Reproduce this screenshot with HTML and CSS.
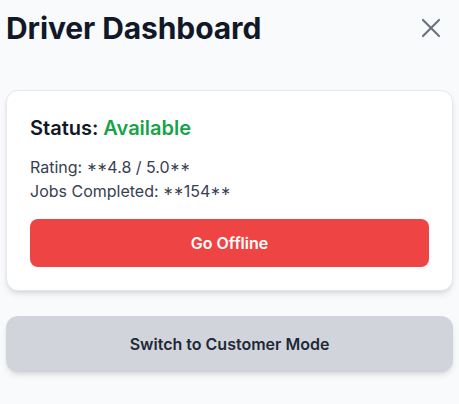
FILE: index.html
```html
<!DOCTYPE html>
<html>
<head>
<meta charset="utf-8">
<link rel="stylesheet" href="styles.css">
</head>
<body>
<div class="page">
  <header class="header">
    <h1 class="title">Driver Dashboard</h1>
    <button class="close" aria-label="Close">
      <svg viewBox="0 0 24 24" width="32" height="32" fill="none" stroke="currentColor" stroke-width="1.6" stroke-linecap="round" stroke-linejoin="round"><path d="M6 18L18 6M6 6l12 12"/></svg>
    </button>
  </header>
  <section class="card">
    <h2 class="status">Status: <span class="available">Available</span></h2>
    <p class="line">Rating: <span class="ast">**</span>4.8 / 5.0<span class="ast">**</span></p>
    <p class="line">Jobs Completed: <span class="ast">**</span>154<span class="ast">**</span></p>
    <button class="btn-offline">Go Offline</button>
  </section>
  <button class="btn-switch">Switch to Customer Mode</button>
</div>
</body>
</html>
```

FILE: styles.css
```css
* { box-sizing: border-box; }
html, body { margin: 0; padding: 0; }
body {
  background: #f9fafb;
  font-family: Inter, "Noto Sans", sans-serif;
  color: #111827;
}
.page {
  padding: 10px 6px 24px;
  display: flex;
  flex-direction: column;
}
.header {
  display: flex;
  justify-content: space-between;
  align-items: center;
  margin-bottom: 44px;
  height: 36px;
}
.title {
  margin: 0;
  font-size: 30px;
  line-height: 36px;
  font-weight: 700;
  letter-spacing: -0.1px;
  color: #111827;
}
.close {
  border: none;
  background: none;
  padding: 0;
  margin-right: 6px;
  width: 32px;
  height: 32px;
  color: #6b7280;
  display: flex;
  cursor: pointer;
}
.card {
  background: #fff;
  border: 1px solid #e5e7eb;
  border-radius: 12px;
  padding: 23px;
  box-shadow: 0 4px 6px -1px rgba(0,0,0,0.1), 0 2px 4px -2px rgba(0,0,0,0.1);
  margin-bottom: 25px;
}
.status {
  margin: 0 0 13px;
  font-size: 20px;
  line-height: 28px;
  font-weight: 600;
  color: #111827;
}
.available { color: #16a34a; }
.line {
  margin: 0;
  font-size: 16px;
  line-height: 24px;
  color: #374151;
}
.ast { font-feature-settings: "case"; }
.btn-offline {
  margin-top: 16px;
  width: 100%;
  height: 48px;
  border: none;
  border-radius: 8px;
  background: #ef4444;
  color: #fff;
  font-family: inherit;
  font-size: 16px;
  font-weight: 600;
}
.btn-switch {
  width: 100%;
  height: 56px;
  border: none;
  border-radius: 12px;
  background: #d1d5db;
  color: #1f2937;
  font-family: inherit;
  font-size: 16px;
  font-weight: 600;
  box-shadow: 0 4px 6px -1px rgba(0,0,0,0.1), 0 2px 4px -2px rgba(0,0,0,0.1);
}
```
